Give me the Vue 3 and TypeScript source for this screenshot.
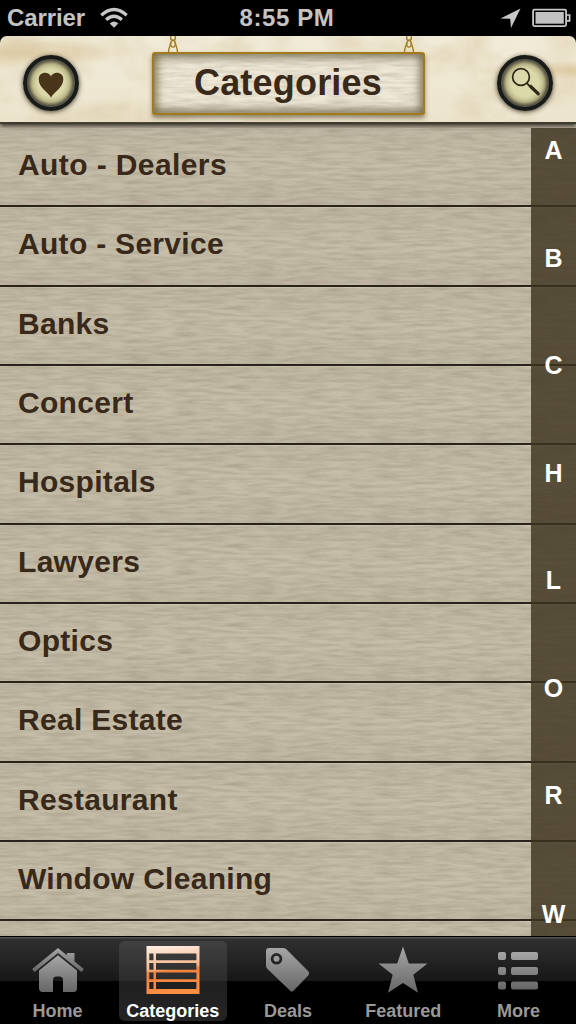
<script setup lang="ts">
interface Tab {
  id: string
  label: string
}

const categories: string[] = [
  'Auto - Dealers',
  'Auto - Service',
  'Banks',
  'Concert',
  'Hospitals',
  'Lawyers',
  'Optics',
  'Real Estate',
  'Restaurant',
  'Window Cleaning',
]

const letters: string[] = ['A', 'B', 'C', 'H', 'L', 'O', 'R', 'W']

const tabs: Tab[] = [
  { id: 'home', label: 'Home' },
  { id: 'categories', label: 'Categories' },
  { id: 'deals', label: 'Deals' },
  { id: 'featured', label: 'Featured' },
  { id: 'more', label: 'More' },
]

const active = 'categories'
</script>

<template>
  <div class="screen">
    <svg class="defs" width="0" height="0" aria-hidden="true">
      <defs>
        <filter id="wood" x="0" y="0" width="100%" height="100%" color-interpolation-filters="sRGB">
          <feTurbulence type="fractalNoise" baseFrequency="0.04 0.3" numOctaves="4" seed="8" />
          <feColorMatrix values="0 0 0 0 0.36  0 0 0 0 0.31  0 0 0 0 0.22  0.9 0 0 0 -0.28" />
        </filter>
        <filter id="paper" x="0" y="0" width="100%" height="100%" color-interpolation-filters="sRGB">
          <feTurbulence type="fractalNoise" baseFrequency="0.022 0.03" numOctaves="5" seed="5" />
          <feColorMatrix values="0 0 0 0 0.72  0 0 0 0 0.62  0 0 0 0 0.4  0.9 0 0 0 -0.35" />
        </filter>
        <linearGradient id="grey" x1="0" y1="0" x2="0" y2="1">
          <stop offset="0" stop-color="#a6a6a6" />
          <stop offset="1" stop-color="#666" />
        </linearGradient>
        <linearGradient id="orange" x1="0" y1="0" x2="0.12" y2="1">
          <stop offset="0" stop-color="#fff1e6" />
          <stop offset="0.5" stop-color="#f8b58a" />
          <stop offset="0.56" stop-color="#f2823c" />
          <stop offset="1" stop-color="#ff8d42" />
        </linearGradient>
      </defs>
    </svg>

    <div class="status">
      <div class="status-side">
        <span>Carrier</span>
        <svg class="wifi" width="28" height="22" viewBox="0 0 28 22">
          <g fill="none" stroke="#c6c6c6" stroke-width="3.3">
            <path d="M1.3 8.2Q14 -3.4 26.7 8.2" />
            <path d="M6.1 12.8Q14 5.7 21.9 12.8" />
          </g>
          <path d="M9.7 16.4Q14 12.4 18.3 16.4L14 20.8Z" fill="#c6c6c6" />
        </svg>
      </div>
      <span class="clock">8:55 PM</span>
      <div class="status-side right">
        <svg width="21" height="21" viewBox="0 0 21 21">
          <path d="M20.5 0.5L11 20L10.2 10.8L0.5 10.5Z" fill="#c8c8c8" />
        </svg>
        <svg width="39" height="20" viewBox="0 0 39 20">
          <rect x="1.1" y="1.6" width="33" height="16.5" rx="1.5" fill="none" stroke="#c8c8c8" stroke-width="1.8" />
          <rect x="3.5" y="4" width="28.3" height="11.7" fill="#c2c2c2" />
          <path d="M34.5 7H37.6V12.8H34.5" fill="none" stroke="#c8c8c8" stroke-width="1.7" />
        </svg>
      </div>
    </div>

    <header class="header">
      <svg class="texture" width="576" height="87"><rect width="576" height="87" filter="url(#paper)" /></svg>
      <button class="round" aria-label="Favorites">
        <svg width="26" height="26" viewBox="0 0 26 26">
          <path d="M13 25.4C9.5 20 0.7 15.2 0.7 7.3C0.7 -0.5 10.7 -1 13 4.5C15.3 -1 25.3 -0.5 25.3 7.3C25.3 15.2 16.5 20 13 25.4Z" fill="#49361a" />
        </svg>
      </button>
      <div class="sign">
        <svg class="sign-grain" width="268" height="58"><rect width="268" height="58" filter="url(#wood)" /></svg>
        <svg v-for="side in ['left', 'right']" :key="side" class="chain" :class="side" width="12" height="17" viewBox="0 0 12 17">
          <g fill="none" stroke="#a47f22" stroke-width="1.4">
            <path d="M3.7 0V3Q6 6 8.3 3V0" />
            <ellipse cx="6" cy="7.7" rx="2.3" ry="3.4" />
            <path d="M1.4 17C1.6 12 3 9.5 4 6.3M10.6 17C10.4 12 9 9.5 8 6.3" />
          </g>
        </svg>
        <h1>Categories</h1>
      </div>
      <button class="round search" aria-label="Search">
        <svg width="30" height="30" viewBox="0 0 30 30">
          <circle cx="10" cy="10" r="8.4" fill="none" stroke="#30261a" stroke-width="1.7" />
          <path d="M16 16.4L19 19.5" stroke="#30261a" stroke-width="1.8" />
          <path d="M17.7 18.8L20 17.5L28.5 25.7Q29.5 28.7 26.7 28.4L18.5 20.7Z" fill="#30261a" />
        </svg>
      </button>
    </header>

    <main class="body">
      <ul class="list">
        <li v-for="c in categories" :key="c" class="row">
          <svg class="grain" width="576" height="80"><rect width="576" height="80" filter="url(#wood)" /></svg>
          <span>{{ c }}</span>
        </li>
        <li class="row tail">
          <svg class="grain" width="576" height="80"><rect width="576" height="80" filter="url(#wood)" /></svg>
        </li>
      </ul>
      <nav class="index">
        <span v-for="l in letters" :key="l">{{ l }}</span>
      </nav>
    </main>

    <nav class="tabs">
      <div v-for="t in tabs" :key="t.id" class="tab" :class="{ on: t.id === active }">
        <svg v-if="t.id === 'home'" width="60" height="50" viewBox="0 0 60 50">
          <g fill="url(#grey)">
            <path d="M4.2 25L30 4L38.8 11.2V9H46.5V17.4L55.8 25L53.5 28L30 8.9L6.5 28Z" />
            <path d="M11 26.5L30 11.3L49 26.5V44Q49 48 45.5 48H35V36Q35 32.5 31.5 32.5H28.5Q25 32.5 25 36V48H14.5Q11 48 11 44Z" />
          </g>
        </svg>
        <svg v-else-if="t.id === 'categories'" width="60" height="50" viewBox="0 0 60 50">
          <path
            fill="url(#orange)"
            fill-rule="evenodd"
            d="M3.5 2H56.5V50H3.5ZM6.3 9.5V16.2H10.5V9.5ZM13 9.5V16.2H53.4V9.5ZM6.3 19V25.7H10.5V19ZM13 19V25.7H53.4V19ZM6.3 28.5V35.3H10.5V28.5ZM13 28.5V35.3H53.4V28.5ZM6.3 38.1V45H10.5V38.1ZM13 38.1V45H53.4V38.1Z"
          />
        </svg>
        <svg v-else-if="t.id === 'deals'" width="60" height="50" viewBox="0 0 60 50">
          <path
            fill="url(#grey)"
            fill-rule="evenodd"
            d="M11 4H25Q27 4 28.6 5.4L50 27Q52.3 29.4 50 31.7L35.5 46.7Q33.8 48.4 32.1 46.7L10 25.5Q8 23.5 8 21.5V7Q8 4 11 4ZM18.5 9A5.8 5.8 0 1 0 18.5 20.6A5.8 5.8 0 1 0 18.5 9Z"
          />
          <circle cx="18.5" cy="14.8" r="3" fill="#999" />
        </svg>
        <svg v-else-if="t.id === 'featured'" width="60" height="50" viewBox="0 0 60 50">
          <path fill="url(#grey)" d="M30 2.5L35.8 19.5H54.5L40.3 30.8L45 48.8L30 39L15 48.8L19.7 30.8L5.5 19.5H24.2Z" />
        </svg>
        <svg v-else width="60" height="50" viewBox="0 0 60 50">
          <g fill="url(#grey)">
            <path d="M12 8h4q2 0 2 2v4q0 2-2 2h-4q-2 0-2-2v-4q0-2 2-2ZM25 8h23q2 0 2 2v4q0 2-2 2h-23q-2 0-2-2v-4q0-2 2-2ZM12 23h4q2 0 2 2v4q0 2-2 2h-4q-2 0-2-2v-4q0-2 2-2ZM25 23h23q2 0 2 2v4q0 2-2 2h-23q-2 0-2-2v-4q0-2 2-2ZM12 37.5h4q2 0 2 2v4q0 2-2 2h-4q-2 0-2-2v-4q0-2 2-2ZM25 37.5h23q2 0 2 2v4q0 2-2 2h-23q-2 0-2-2v-4q0-2 2-2Z" />
          </g>
        </svg>
        <span>{{ t.label }}</span>
      </div>
    </nav>
  </div>
</template>

<style>
body {
  margin: 0;
  background: #000;
}
</style>

<style scoped>
* {
  box-sizing: border-box;
}
.screen {
  width: 576px;
  height: 1024px;
  display: flex;
  flex-direction: column;
  overflow: hidden;
  background: #000;
  font-family: "Liberation Sans", Arial, Helvetica, sans-serif;
  font-weight: bold;
}
svg {
  display: block;
  flex: none;
}
.defs {
  position: absolute;
}
.status {
  height: 36px;
  flex: none;
  display: grid;
  grid-template-columns: 1fr auto 1fr;
  align-items: center;
  padding: 0 5px 0 7px;
  color: #c4c4c4;
  font-size: 24px;
  line-height: 36px;
}
.status-side {
  display: flex;
  align-items: center;
  gap: 15px;
}
.status-side span {
  letter-spacing: -0.1px;
}
.status-side.right {
  justify-content: flex-end;
  gap: 11px;
}
.clock {
  margin-right: 4px;
  letter-spacing: 0.6px;
}
.header {
  position: relative;
  z-index: 2;
  height: 88px;
  flex: none;
  display: flex;
  align-items: flex-start;
  justify-content: space-between;
  padding: 16px 23px 0;
  border-radius: 7px 7px 0 0;
  border-bottom: 2px solid #3c392d;
  background:
    radial-gradient(ellipse at 0 20%, rgba(202, 171, 105, 0.4), transparent 16%),
    radial-gradient(ellipse at 100% 40%, rgba(208, 172, 108, 0.4), transparent 13%),
    linear-gradient(#f2ebd8, #ece4cd);
  box-shadow: 0 2px 4px rgba(30, 27, 20, 0.85);
}
.texture {
  position: absolute;
  left: 0;
  top: 0;
  opacity: 0.5;
  border-radius: 7px 7px 0 0;
}
.round {
  position: relative;
  width: 56px;
  height: 56px;
  margin-top: 3px;
  padding: 3px 0 0;
  display: flex;
  align-items: center;
  justify-content: center;
  border: 4px solid #191b19;
  border-radius: 50%;
  background: radial-gradient(circle, #dbd8a9 40%, #bfba8c 56%, #6f6a50 70%);
  box-shadow:
    0 1px 5px rgba(38, 29, 12, 0.85),
    inset 0 0 0 1px #5c5d56,
    inset 0 0 5px 1px #343126;
}
.search {
  padding: 0 0 3px 1px;
}
.sign {
  position: relative;
  width: 273px;
  height: 63px;
  border: 2px solid #a17b1b;
  border-radius: 3px;
  background: #efe8d7;
  box-shadow: 0 3px 4px rgba(72, 59, 31, 0.55);
}
.sign::after {
  content: "";
  position: absolute;
  inset: 0;
  box-shadow: inset 0 0 10px 3px rgba(91, 81, 54, 0.8);
}
.sign-grain {
  position: absolute;
  left: 0;
  top: 0;
  width: 269px;
  height: 59px;
  opacity: 0.35;
}
.chain {
  position: absolute;
  top: -18px;
}
.chain.left {
  left: 13px;
}
.chain.right {
  right: 8px;
}
h1 {
  position: relative;
  margin: 0;
  text-align: center;
  font-size: 36px;
  line-height: 57px;
  letter-spacing: 0.2px;
  color: #38291a;
}
.body {
  position: relative;
  height: 812px;
  flex: none;
  overflow: hidden;
  background: #bdb4a0;
}
.list {
  margin: 0;
  padding: 3.9px 0 0;
  list-style: none;
}
.row {
  position: relative;
  height: 79.35px;
  padding-left: 18px;
  overflow: hidden;
  border-bottom: 2px solid #29231c;
  box-shadow: inset 0 1px #cdc5b0;
  background: linear-gradient(#c1b9a4, #c7bfaa 50%, #c1b8a4);
  font-size: 30px;
  line-height: 74px;
  letter-spacing: 0.3px;
  color: #38291a;
}
.row span {
  position: relative;
}
.row:first-child {
  letter-spacing: 0.4px;
}
.tail {
  height: 16px;
  border-bottom: 0;
}
.grain {
  position: absolute;
  left: 0;
  top: 0;
  opacity: 0.4;
}
.index {
  position: absolute;
  right: 0;
  top: 4px;
  bottom: 0;
  width: 45px;
  display: flex;
  flex-direction: column;
  align-items: center;
  background: rgba(60, 50, 30, 0.8);
  color: #fff;
  font-size: 25px;
}
.index span {
  flex: none;
  height: 107.5px;
  line-height: 44px;
}
.index span:last-child {
  margin-top: 11.5px;
  height: 44px;
}
.tabs {
  height: 88px;
  flex: none;
  display: flex;
  border-top: 1px solid #000;
  background: linear-gradient(#505050 0 1px, #303030 2px, #171717 44px, #000 44px);
}
.tab {
  flex: 1 1 0;
  display: flex;
  flex-direction: column;
  align-items: center;
  margin: 4px 3.6px 3px;
  padding-top: 3px;
  border-radius: 6px;
  font-size: 18px;
  line-height: 22px;
  color: #999;
}
.tab span {
  margin-top: 6px;
  white-space: nowrap;
}
.tab.on {
  color: #fff;
  background: linear-gradient(#414141, #2b2b2b 40px, #202020 40px, #242424);
}
</style>
